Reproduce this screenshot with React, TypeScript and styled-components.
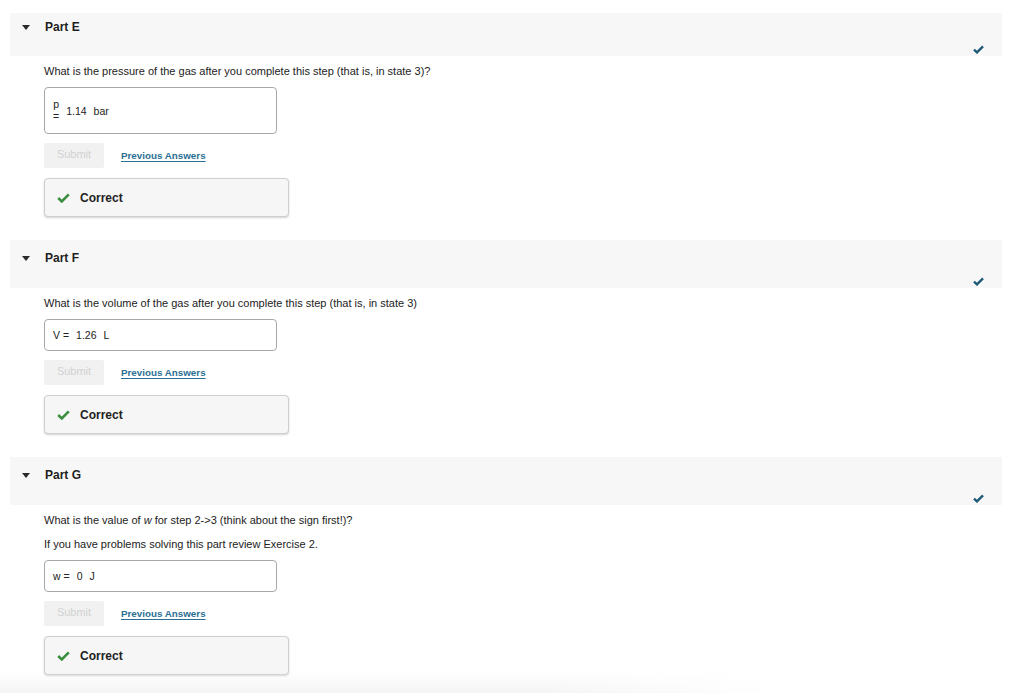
import React from "react";
import styled, { createGlobalStyle } from "styled-components";

const GlobalStyle = createGlobalStyle`
  html, body {
    margin: 0;
    padding: 0;
    background: #ffffff;
    font-family: "Liberation Sans", Arial, Helvetica, sans-serif;
    color: #222222;
  }
`;

const Page = styled.div`
  width: 1024px;
  height: 693px;
  overflow: hidden;
  padding: 13px 22px 0 10px;
  box-sizing: border-box;
`;

const Section = styled.section`
  margin-bottom: 23px;
`;

const Header = styled.div<{ $compact?: boolean }>`
  display: flex;
  justify-content: space-between;
  background: #f7f7f7;
  height: ${(p) => (p.$compact ? "43px" : "48px")};
  padding: ${(p) => (p.$compact ? "7px" : "11px")} 18px 2px 12px;
  box-sizing: border-box;
`;

const TitleRow = styled.div`
  display: flex;
  align-items: center;
  gap: 15px;
  height: 14px;
`;

const Caret = styled.span`
  width: 0;
  height: 0;
  border-left: 4.5px solid transparent;
  border-right: 4.5px solid transparent;
  border-top: 5px solid #2b2b2b;
`;

const Title = styled.h3`
  margin: 0;
  font-size: 12px;
  font-weight: bold;
  color: #1f1f1f;
`;

const DoneMark = styled.svg`
  align-self: flex-end;
  width: 11px;
  height: 9px;
`;

const Body = styled.div`
  padding: 7px 0 0 34px;
`;

const Question = styled.p`
  margin: 0 0 8px;
  font-size: 11px;
  line-height: 16px;
  color: #222222;
`;

const AnswerBox = styled.div<{ $tall?: boolean }>`
  display: flex;
  align-items: center;
  width: 233px;
  height: ${(p) => (p.$tall ? "47px" : "32px")};
  margin-top: ${(p) => (p.$tall ? "6px" : "8px")};
  border: 1px solid #a8a8a8;
  border-radius: 4px;
  box-sizing: border-box;
  padding: 0 8px;
  font-size: 10.5px;
  color: #222222;
`;

const Stacked = styled.span`
  display: flex;
  flex-direction: column;
  align-items: center;
  line-height: 12px;
  margin-right: 7px;
  margin-top: -2px;
`;

const Label = styled.span`
  margin-right: 7px;
`;

const Value = styled.span`
  margin-right: 7px;
`;

const Actions = styled.div`
  display: flex;
  align-items: center;
  gap: 17px;
  margin-top: 9px;
`;

const SubmitButton = styled.button`
  width: 60px;
  height: 25px;
  border: none;
  border-radius: 2px;
  background: #f1f1f1;
  color: #d2d2d2;
  font-family: inherit;
  font-size: 11px;
  padding: 0 0 3px;
`;

const PrevLink = styled.a`
  font-size: 9.8px;
  font-weight: bold;
  color: #2a6f94;
  text-decoration: underline;
  text-underline-offset: 2px;
`;

const Feedback = styled.div`
  display: flex;
  align-items: center;
  gap: 10px;
  width: 245px;
  height: 39px;
  margin-top: 10px;
  padding: 0 12px;
  box-sizing: border-box;
  background: #f6f6f6;
  border: 1px solid #cfcfcf;
  border-radius: 4px;
  box-shadow: 0 1px 2px rgba(0, 0, 0, 0.18);
  font-size: 12px;
  font-weight: bold;
  color: #222222;
`;

const BottomFade = styled.div`
  position: fixed;
  left: 0;
  bottom: 0;
  width: 780px;
  height: 22px;
  background: linear-gradient(to bottom, rgba(245, 245, 245, 0), rgba(243, 243, 243, 0.85));
  -webkit-mask-image: linear-gradient(to right, #000 70%, transparent);
  mask-image: linear-gradient(to right, #000 70%, transparent);
  pointer-events: none;
`;

const HeaderCheck = () => (
  <DoneMark viewBox="0 0 11 9">
    <path d="M1 4.6 L4 7.4 L10 1.4" fill="none" stroke="#1f5b78" strokeWidth="2.4" />
  </DoneMark>
);

const GreenCheck = () => (
  <svg width="13" height="10" viewBox="0 0 13 10">
    <path d="M1.2 5 L4.8 8.4 L11.8 1.4" fill="none" stroke="#3b8d3e" strokeWidth="2.6" />
  </svg>
);

type Part = {
  name: string;
  questions: React.ReactNode[];
  answer: React.ReactNode;
  tall?: boolean;
};

const parts: Part[] = [
  {
    name: "Part E",
    questions: ["What is the pressure of the gas after you complete this step (that is, in state 3)?"],
    tall: true,
    answer: (
      <>
        <Stacked>
          <span>p</span>
          <span>=</span>
        </Stacked>
        <Value>1.14</Value>
        <span>bar</span>
      </>
    ),
  },
  {
    name: "Part F",
    questions: ["What is the volume of the gas after you complete this step (that is, in state 3)"],
    answer: (
      <>
        <Label>V =</Label>
        <Value>1.26</Value>
        <span>L</span>
      </>
    ),
  },
  {
    name: "Part G",
    questions: [
      <>
        What is the value of <i>w</i> for step 2-&gt;3 (think about the sign first!)?
      </>,
      "If you have problems solving this part review Exercise 2.",
    ],
    answer: (
      <>
        <Label>w =</Label>
        <Value>0</Value>
        <span>J</span>
      </>
    ),
  },
];

export default function App() {
  return (
    <>
      <GlobalStyle />
      <Page>
        {parts.map((part, i) => (
          <Section key={part.name}>
            <Header $compact={i === 0}>
              <TitleRow>
                <Caret />
                <Title>{part.name}</Title>
              </TitleRow>
              <HeaderCheck />
            </Header>
            <Body>
              {part.questions.map((q, j) => (
                <Question key={j}>{q}</Question>
              ))}
              <AnswerBox $tall={part.tall}>{part.answer}</AnswerBox>
              <Actions>
                <SubmitButton disabled>Submit</SubmitButton>
                <PrevLink>Previous Answers</PrevLink>
              </Actions>
              <Feedback>
                <GreenCheck />
                <span>Correct</span>
              </Feedback>
            </Body>
          </Section>
        ))}
        <BottomFade />
      </Page>
    </>
  );
}
